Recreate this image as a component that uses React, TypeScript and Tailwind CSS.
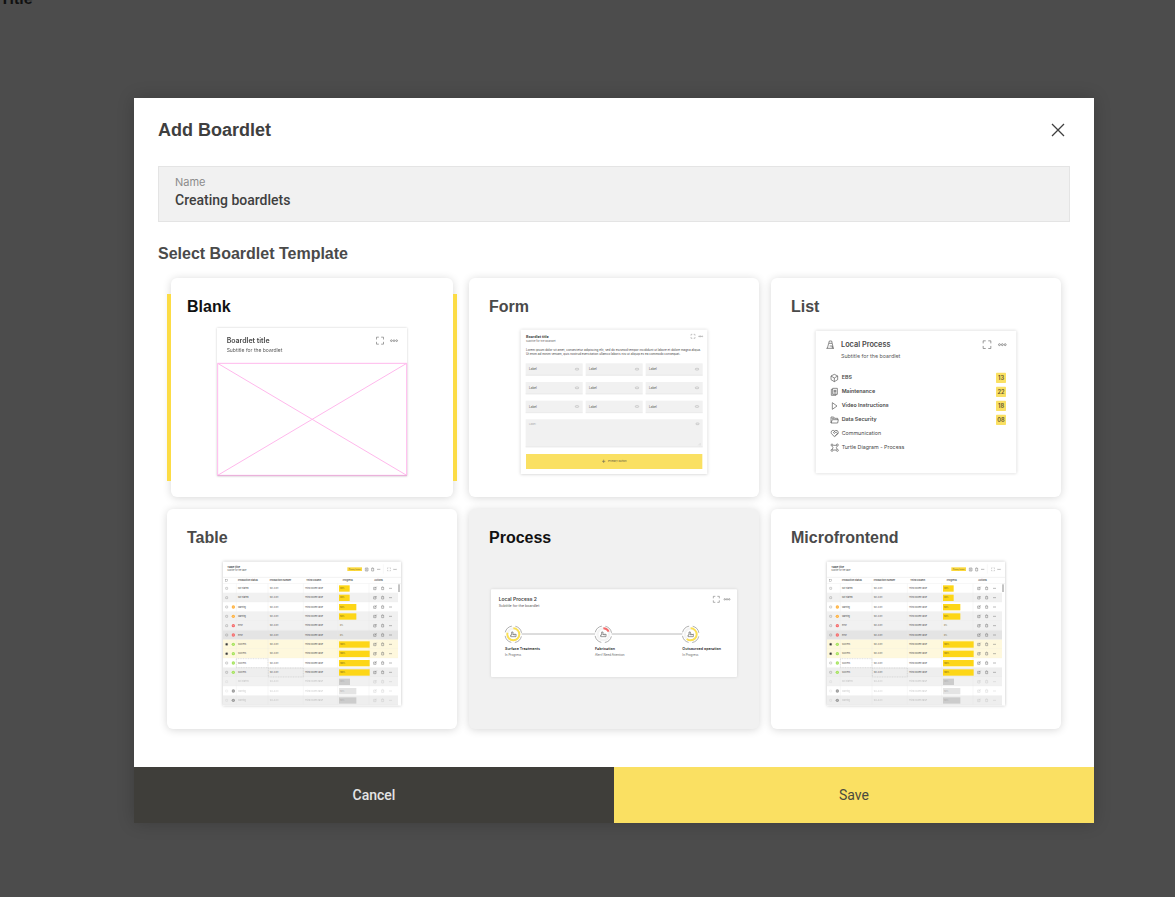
import React, { useState } from "react";
import { HeartHandshake } from "lucide-react";

// Expand + "more" icons in the top right of every preview
function PreviewActions({ x, y, size, gap }: { x: number; y: number; size: number; gap: number }) {
  const h = size / 2;
  const q = size / 3;
  const r = size / 8;
  return (
    <g fill="none" stroke="#6f6f6f" strokeWidth={size / 11}>
      <path d={`M${x - h} ${y - h + q}v${-q}h${q}M${x + h - q} ${y - h}h${q}v${q}M${x + h} ${y + h - q}v${q}h${-q}M${x - h + q} ${y + h}h${-q}v${-q}`} />
      {[-1, 0, 1].map((i) => (
        <circle key={i} cx={x + gap + i * r * 3} cy={y} r={r} />
      ))}
    </g>
  );
}

function BlankPreview() {
  return (
    <svg viewBox="168 171 576 447" className="h-[149px] w-48 overflow-visible font-['Inter',sans-serif] drop-shadow-[0_0_1px_rgba(0,0,0,0.2)]">
      <rect x="171" y="174" width="570" height="444" fill="#fff" />
      <text x="200" y="219" fontSize="21" fontWeight="600" fill="#4a4a4a">Boardlet title</text>
      <text x="200" y="245" fontSize="15" fill="#5a5a5a">Subtitle for the boardlet</text>
      <PreviewActions x={660} y={212} size={21} gap={42} />
      <path d="M173 280H740V616H173ZM173 280L740 616M740 280L173 616" fill="none" stroke="#ffb8ec" strokeWidth="3" />
      <path d="M172 617H741" stroke="#d9a5cb" strokeWidth="2" />
    </svg>
  );
}

function FormPreview() {
  return (
    <svg viewBox="165 175 564 438" className="h-[146px] w-[188px] overflow-visible font-['Inter',sans-serif]">
      <rect x="167" y="177" width="560" height="433" fill="#fff" className="drop-shadow-[0_1px_4px_rgba(0,0,0,0.2)]" />
      <text x="183" y="201" fontSize="11" fontWeight="700" fill="#4a4a4a">Boardlet title</text>
      <text x="183" y="215" fontSize="8" fill="#666">Subtitle for the boardlet</text>
      <PreviewActions x={684} y={197} size={12} gap={23} />
      <g fontSize="9" fill="#444">
        <text x="183" y="241">Lorem ipsum dolor sit amet, consectetur adipiscing elit, sed do eiusmod tempor incididunt ut labore et dolore magna aliqua.</text>
        <text x="183" y="254">Ut enim ad minim veniam, quis nostrud exercitation ullamco laboris nisi ut aliquip ex ea commodo consequat.</text>
      </g>
      {[278, 334, 390].map((y) =>
        [182, 362, 542].map((x) => (
          <g key={x + "-" + y}>
            <rect x={x} y={y} width="171" height="36" fill="#f1f1f1" />
            <path d={`M${x} ${y + 36}h171`} stroke="#e4e4e4" strokeWidth="2" />
            <text x={x + 10} y={y + 21} fontSize="9" fill="#555">Label</text>
            <rect x={x + 149} y={y + 15} width="10" height="5" rx="2" fill="none" stroke="#aaa" strokeWidth="1.5" />
          </g>
        ))
      )}
      <rect x="182" y="446" width="531" height="83" fill="#f1f1f1" />
      <path d="M182 529h531" stroke="#e4e4e4" strokeWidth="2" />
      <text x="192" y="463" fontSize="8" fill="#aaa">Label</text>
      <rect x="693" y="457" width="9" height="5" rx="2" fill="none" stroke="#aaa" strokeWidth="1.5" />
      <path d="M700 524l7-7M704 525l4-4" stroke="#bbb" strokeWidth="1" />
      <rect x="183" y="550" width="529" height="45" fill="#fae062" />
      <path d="M411 572h10M416 567v10" stroke="#555" strokeWidth="1.5" />
      <text x="429" y="575" fontSize="8" fill="#5c5640">Primary button</text>
    </svg>
  );
}

const listRows = [
  { name: "EBS", count: "13", y: 321 },
  { name: "Maintenance", count: "22", y: 363 },
  { name: "Video Instructions", count: "18", y: 405 },
  { name: "Data Security", count: "08", y: 447 },
  { name: "Communication", count: "", y: 488 },
  { name: "Turtle Diagram - Process", count: "", y: 530 },
];

function ListPreview() {
  return (
    <svg viewBox="150 178 606 432" className="h-36 w-[202px] overflow-visible font-['Inter',sans-serif]">
      <rect x="152" y="180" width="602" height="428" rx="3" fill="#fff" className="drop-shadow-[0_0_4px_rgba(0,0,0,0.2)]" />
      <text x="228" y="229" fontSize="22" fontWeight="600" fill="#4a4a4a">Local Process</text>
      <text x="228" y="261" fontSize="16" fill="#5a5a5a">Subtitle for the boardlet</text>
      <PreviewActions x={666} y={222} size={23} gap={46} />
      <g fill="none" stroke="#555" strokeWidth="2">
        {/* cone */}
        <path d="M184 233h23M187 233l6-22h7l5 22M194 226h8v7M192 218h9" />
        {/* box */}
        <path d="M208 311l10 5v11l-10 6-10-6v-11zM198 316l10 6 10-6M208 322v11" />
        {/* documents */}
        <path d="M203 353h14v18h-14zM203 356h-4v18h14v-3M207 359h6v4h-6zM206 367h8" />
        {/* play */}
        <path d="M202 396v20l14-10z" />
        {/* folder */}
        <path d="M198 457v-18h8l3 4h9v4M198 457l4-10h18l-2 10zM200 443h8" />
        {/* turtle diagram */}
        <path d="M205 524h8M205 538h8M202 527l2 4-2 4M216 527l-2 4 2 4" />
        <circle cx="201" cy="523" r="3" />
        <circle cx="217" cy="523" r="3" />
        <circle cx="201" cy="539" r="3" />
        <circle cx="217" cy="539" r="3" />
      </g>
      <HeartHandshake x={196} y={475} size={26} color="#555" strokeWidth={2} />
      {listRows.map((row) => (
        <g key={row.name}>
          <text x="230" y={row.y + 5} fontSize="16" fontWeight={row.count ? 600 : 400} fill="#4a4a4a">{row.name}</text>
          {row.count && (
            <>
              <rect x="693" y={row.y - 15} width="30" height="31" rx="2" fill="#fae062" />
              <text x="708" y={row.y + 6} fontSize="17" fontWeight="600" textAnchor="middle" fill="#5c5230">{row.count}</text>
            </>
          )}
        </g>
      ))}
    </svg>
  );
}

const tableColumns = [
  { label: "Production status", x: 69 },
  { label: "Production number", x: 164 },
  { label: "Third column", x: 274 },
  { label: "Progress", x: 383 },
  { label: "Actions", x: 478 },
];

const tableRows = [
  { status: "Not started", dot: "", bg: "#ffffff", bar: 32, fill: "#fdd617", value: "30%" },
  { status: "Not started", dot: "", bg: "#f1f1f1", bar: 32, fill: "#fdd617", value: "30%" },
  { status: "Warning", dot: "#ffb13d", bg: "#ffffff", bar: 52, fill: "#fdd617", value: "50%" },
  { status: "Warning", dot: "#ffb13d", bg: "#f1f1f1", bar: 52, fill: "#fdd617", value: "50%" },
  { status: "Error", dot: "#f56a6a", bg: "#f1f1f1", bar: 0, fill: "none", value: "0%" },
  { status: "Error", dot: "#f56a6a", bg: "#e4e4e4", bar: 0, fill: "none", value: "0%" },
  { status: "Success", dot: "#a4e35a", bg: "#fef8dd", bar: 92, fill: "#fdd617", value: "100%", checked: true },
  { status: "Success", dot: "#a4e35a", bg: "#fef8dd", bar: 92, fill: "#fdd617", value: "100%", checked: true },
  { status: "Success", dot: "#a4e35a", bg: "#ffffff", bar: 92, fill: "#fdd617", value: "100%" },
  { status: "Success", dot: "#a4e35a", bg: "#eeeeee", bar: 92, fill: "#fdd617", value: "100%" },
  { status: "Not started", dot: "", bg: "#f1f1f1", bar: 33, fill: "#cccccc", value: "30%", muted: true },
  { status: "Warning", dot: "#9a9a9a", bg: "#ffffff", bar: 52, fill: "#e4e4e4", value: "50%", muted: true },
  { status: "Warning", dot: "#9a9a9a", bg: "#eeeeee", bar: 52, fill: "#cccccc", value: "50%", muted: true },
];

function TablePreview() {
  return (
    <svg viewBox="24 18 534 432" className="h-36 w-[178px] overflow-visible font-['Inter',sans-serif]">
      <rect x="24" y="20" width="534" height="432" fill="#fff" className="drop-shadow-[0_0_5px_rgba(0,0,0,0.25)]" />
      <text x="37" y="38" fontSize="8" fontWeight="700" fill="#444">Table title</text>
      <text x="37" y="48" fontSize="6" fill="#555">Subtitle for the table</text>
      <rect x="397" y="37" width="44" height="11" fill="#fbd83c" />
      <text x="419" y="45" fontSize="5" textAnchor="middle" fill="#6b5f20">Primary button</text>
      <path d="M451 39h8v9h-8zM453 42h4M453 45h4M469 40h8M470 40v8h6v-8M472 38h2M486 43h10" fill="none" stroke="#777" strokeWidth="1.5" />
      <path d="M505 28v28" stroke="#e6e6e6" strokeWidth="1" />
      <PreviewActions x={522} y={43} size={9} gap={18} />
      <path d="M24 67h534M24 86h534" stroke="#e2e2e2" strokeWidth="1.5" />
      <rect x="32" y="73" width="6" height="6" fill="none" stroke="#777" />
      {tableColumns.map((col) => (
        <text key={col.label} x={col.x} y="78" fontSize="7" fontWeight="600" fill="#444">{col.label}</text>
      ))}
      {tableRows.map((row, i) => {
        const y = 86 + i * 28;
        return (
          <g key={i}>
            <rect x="24" y={y} width="525" height="28" fill={row.bg} />
            <path d={`M24 ${y + 28}h525M64 ${y}v28M159 ${y}v28M265 ${y}v28M368 ${y}v28M462 ${y}v28`} stroke="#e8e8e8" strokeWidth="1" />
            <g opacity={row.muted ? 0.3 : 1}>
              <rect x="32" y={y + 11} width="6" height="6" rx="1" fill={row.checked ? "#333" : "none"} stroke="#777" />
              <g fontSize="6" fill="#444">
                <text x="69" y={y + 16}>{row.status}</text>
                <text x="164" y={y + 16}>162-4231</text>
                <text x="270" y={y + 16}>Third column value</text>
              </g>
              <path
                d={`M476 ${y + 11}h7v7h-7zM479 ${y + 15}l6-6M499 ${y + 11}h8M500 ${y + 11}v7h6v-7M502 ${y + 9}h2M522 ${y + 14}h9`}
                fill="none"
                stroke="#777"
                strokeWidth="1.5"
              />
            </g>
            {row.dot && (
              <>
                <circle cx="55" cy={y + 14} r="5" fill={row.dot} />
                <path d={`M53 ${y + 14}h4`} stroke="#fff" strokeWidth="1" />
              </>
            )}
            <rect x="372" y={y + 5} width={row.bar} height="19" fill={row.fill} />
            <text x="375" y={y + 16} fontSize="6" fill={row.muted ? "#aaa" : "#6b5a14"}>{row.value}</text>
          </g>
        );
      })}
      <path d="M64 311h95v27h-95zM160 339h105v27h-105z" fill="none" stroke="#aaa" strokeWidth="1" strokeDasharray="3 2" />
      <rect x="549" y="88" width="6" height="23" fill="#c4c4c4" />
    </svg>
  );
}

const steps = [
  { x: 145, name: "Surface Treatments", note: "In Progress", color: "#fbe052", part: 78 },
  { x: 415, name: "Fabrication", note: "Alert! Need Attention", color: "#f46a6a", part: 17 },
  { x: 677, name: "Outsourced operation", note: "In Progress", color: "#fbe052", part: 60 },
];

function ProcessPreview() {
  return (
    <svg viewBox="78 253 738 264" className="h-22 w-[246px] overflow-visible font-['Inter',sans-serif]">
      <rect x="78" y="254" width="738" height="263" rx="3" fill="#fff" className="drop-shadow-[0_0_4px_rgba(0,0,0,0.12)]" />
      <text x="101" y="289" fontSize="15" fontWeight="600" fill="#444">Local Process 2</text>
      <text x="101" y="308" fontSize="11" fill="#555">Subtitle for the boardlet</text>
      <PreviewActions x={754} y={284} size={18} gap={32} />
      <path d="M145 388H677" stroke="#999" strokeWidth="2" />
      {steps.map((s) => (
        <g key={s.name}>
          <circle cx={s.x} cy="389" r="25" fill="#fff" stroke="#8a8a8a" strokeWidth="2" pathLength="100" strokeDasharray="18 7" strokeDashoffset="-4" />
          <circle cx={s.x} cy="389" r="21" fill="#f4f4f4" />
          <circle
            cx={s.x}
            cy="389"
            r="18"
            fill="none"
            stroke={s.color}
            strokeWidth="6"
            pathLength="100"
            strokeDasharray={`${s.part} 100`}
            transform={`rotate(-90 ${s.x} 389)`}
          />
          <circle cx={s.x} cy="389" r="14" fill="#fff" />
          {/* factory */}
          <path d={`M${s.x - 8} 396v-5h3v-9h4v9l4-3v3l5-3v8z`} fill="none" stroke="#666" strokeWidth="2" />
          <text x={s.x - 25} y="437" fontSize="11" fontWeight="600" fill="#333">{s.name}</text>
          <text x={s.x - 25} y="453" fontSize="9" fill="#666">{s.note}</text>
        </g>
      ))}
    </svg>
  );
}

const templates = [
  { name: "Blank", Preview: BlankPreview },
  { name: "Form", Preview: FormPreview },
  { name: "List", Preview: ListPreview },
  { name: "Table", Preview: TablePreview },
  { name: "Process", Preview: ProcessPreview },
  { name: "Microfrontend", Preview: TablePreview },
];

export default function App() {
  const [name, setName] = useState("Creating boardlets");
  const [selected, setSelected] = useState("Blank");
  const [hovered, setHovered] = useState("Process");

  return (
    <div className="min-h-screen bg-[#4c4c4c] font-['Liberation_Sans',sans-serif]">
      {/* PAGE BEHIND THE DIALOG */}
      <header className="flex h-1 items-end overflow-hidden text-base font-bold text-[#111111]">
        <span className="leading-[10px]">Title</span>
      </header>

      {/* DIALOG */}
      <div className="flex justify-center pt-[94px] pb-[74px] pl-[53px]">
        <div role="dialog" aria-labelledby="dialog-title" className="w-full max-w-[960px] bg-white shadow-[0_0_16px_rgba(0,0,0,0.2)]">
          <div className="flex h-16 items-center justify-between px-6">
            <h1 id="dialog-title" className="text-lg font-bold text-[#3f3f3f]">Add Boardlet</h1>
            <button type="button" aria-label="Close" className="flex size-6 items-center justify-center">
              <svg viewBox="0 0 12 12" className="size-3 overflow-visible" fill="none" stroke="#3f3f3f" strokeWidth="1.3">
                <path d="M0 0l12 12M12 0L0 12" />
              </svg>
            </button>
          </div>

          <div className="px-6 pt-1">
            <div className="flex h-14 flex-col justify-center border border-[#e4e4e4] bg-[#f1f1f1] px-4 pb-1">
              <label htmlFor="boardlet-name" className="font-['Inter',sans-serif] text-[11px] leading-4 text-[#8c8c8c]">Name</label>
              <input
                id="boardlet-name"
                value={name}
                onChange={(e) => setName(e.target.value)}
                className="h-5 bg-transparent font-['Roboto',sans-serif] text-sm font-medium text-[#3f3f3f] outline-none"
              />
            </div>
            <h2 className="pt-5 text-base leading-6 font-bold text-[#4a4a4a]">Select Boardlet Template</h2>
          </div>

          <div className="grid grid-cols-3 grid-rows-[219px_220px] gap-3 px-[33px] pt-3 pb-[38px]">
            {templates.map(({ name: title, Preview }) => {
              const active = title === selected;
              const hover = title === hovered;
              return (
                <div key={title} className="flex" onMouseEnter={() => setHovered(title)}>
                  {active && <span className="relative z-10 my-4 w-1 bg-[#fcdc45]" />}
                  <button
                    type="button"
                    aria-pressed={active}
                    onClick={() => setSelected(title)}
                    className={`flex flex-1 flex-col rounded-md pt-[17px] pb-[13px] text-left shadow-[0_1px_8px_rgba(0,0,0,0.16)] ${hover ? "bg-[#f1f1f1]" : "bg-white"}`}
                  >
                    <span className={`text-base leading-6 font-bold ${active ? "px-4" : "px-5"} ${active || hover ? "text-[#111111]" : "text-[#4a4a4a]"}`}>
                      {title}
                    </span>
                    <span className="flex w-full flex-1 items-center justify-center">
                      <Preview />
                    </span>
                  </button>
                  {active && <span className="relative z-10 my-4 w-1 bg-[#fcdc45]" />}
                </div>
              );
            })}
          </div>

          <div className="grid grid-cols-2 font-['Roboto',sans-serif] text-sm">
            <button type="button" className="h-14 bg-[#3f3e3a] font-medium text-[#e4e4e4]">Cancel</button>
            <button type="button" className="h-14 bg-[#fae062] text-[#4a4a3f]">Save</button>
          </div>
        </div>
      </div>
    </div>
  );
}
